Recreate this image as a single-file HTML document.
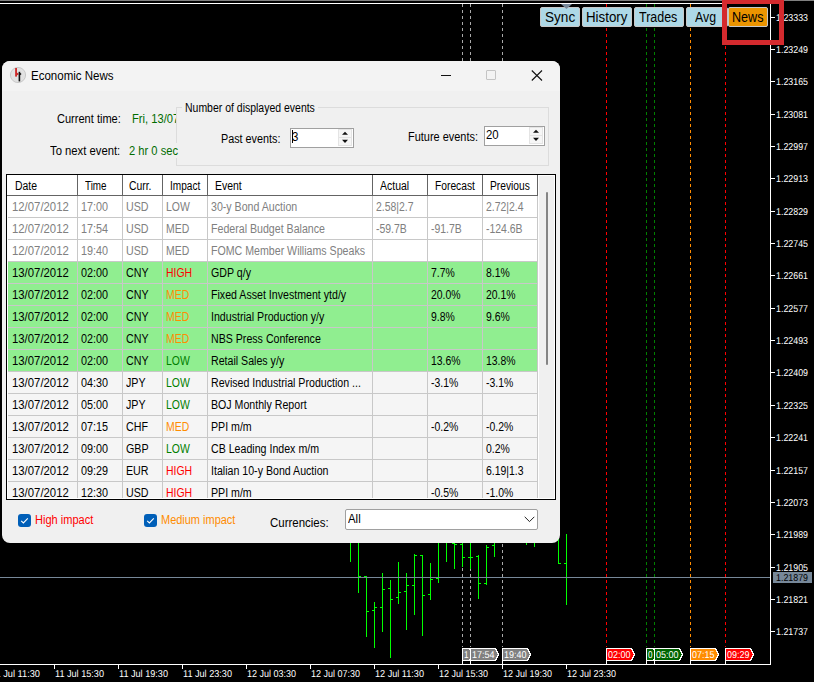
<!DOCTYPE html><html><head><meta charset="utf-8"><style>
html,body{margin:0;padding:0;}
body{width:814px;height:682px;background:#000;position:relative;overflow:hidden;font-family:"Liberation Sans",sans-serif;}
.chart{position:absolute;left:0;top:0;}
.t{position:absolute;white-space:pre;transform-origin:0 0;}
.btn{position:absolute;border:1px solid #c8c8c8;border-radius:2px;}
</style></head><body>
<svg class="chart" width="814" height="682" viewBox="0 0 814 682" shape-rendering="crispEdges" font-family="Liberation Sans, sans-serif"><rect x="0" y="0" width="814" height="1" fill="#808080"/><rect x="0" y="3" width="771" height="1" fill="#fff"/><rect x="770" y="3" width="1" height="662" fill="#fff"/><rect x="0" y="664" width="771" height="1" fill="#fff"/><line x1="462.5" y1="4" x2="462.5" y2="647" stroke="#a9a9a9" stroke-width="1" stroke-dasharray="3 3"/><line x1="470.5" y1="4" x2="470.5" y2="647" stroke="#a9a9a9" stroke-width="1" stroke-dasharray="3 3"/><line x1="502.5" y1="4" x2="502.5" y2="647" stroke="#a9a9a9" stroke-width="1" stroke-dasharray="3 3"/><line x1="606.5" y1="4" x2="606.5" y2="647" stroke="#ff0000" stroke-width="1" stroke-dasharray="3 3"/><line x1="646.5" y1="4" x2="646.5" y2="647" stroke="#008000" stroke-width="1" stroke-dasharray="3 3"/><line x1="654.5" y1="4" x2="654.5" y2="647" stroke="#008000" stroke-width="1" stroke-dasharray="3 3"/><line x1="690.5" y1="4" x2="690.5" y2="647" stroke="#ff8c00" stroke-width="1" stroke-dasharray="3 3"/><line x1="725.5" y1="4" x2="725.5" y2="647" stroke="#ff0000" stroke-width="1" stroke-dasharray="3 3"/><rect x="0" y="577" width="770" height="1" fill="#778899"/><rect x="350" y="530" width="1" height="32" fill="#00ff00"/><rect x="358" y="530" width="1" height="63" fill="#00ff00"/><rect x="359" y="576" width="2" height="1" fill="#00ff00"/><rect x="366" y="576" width="1" height="61" fill="#00ff00"/><rect x="364" y="576" width="2" height="1" fill="#00ff00"/><rect x="367" y="611" width="2" height="1" fill="#00ff00"/><rect x="374" y="602" width="1" height="46" fill="#00ff00"/><rect x="372" y="610" width="2" height="1" fill="#00ff00"/><rect x="375" y="607" width="2" height="1" fill="#00ff00"/><rect x="382" y="573" width="1" height="59" fill="#00ff00"/><rect x="380" y="607" width="2" height="1" fill="#00ff00"/><rect x="383" y="589" width="2" height="1" fill="#00ff00"/><rect x="390" y="580" width="1" height="78" fill="#00ff00"/><rect x="388" y="588" width="2" height="1" fill="#00ff00"/><rect x="391" y="599" width="2" height="1" fill="#00ff00"/><rect x="398" y="562" width="1" height="42" fill="#00ff00"/><rect x="396" y="597" width="2" height="1" fill="#00ff00"/><rect x="399" y="592" width="2" height="1" fill="#00ff00"/><rect x="406" y="573" width="1" height="57" fill="#00ff00"/><rect x="404" y="591" width="2" height="1" fill="#00ff00"/><rect x="407" y="585" width="2" height="1" fill="#00ff00"/><rect x="414" y="554" width="1" height="61" fill="#00ff00"/><rect x="412" y="585" width="2" height="1" fill="#00ff00"/><rect x="415" y="555" width="2" height="1" fill="#00ff00"/><rect x="422" y="555" width="1" height="81" fill="#00ff00"/><rect x="420" y="555" width="2" height="1" fill="#00ff00"/><rect x="423" y="595" width="2" height="1" fill="#00ff00"/><rect x="430" y="563" width="1" height="37" fill="#00ff00"/><rect x="428" y="594" width="2" height="1" fill="#00ff00"/><rect x="431" y="579" width="2" height="1" fill="#00ff00"/><rect x="438" y="530" width="1" height="53" fill="#00ff00"/><rect x="436" y="578" width="2" height="1" fill="#00ff00"/><rect x="446" y="530" width="1" height="32" fill="#00ff00"/><rect x="454" y="530" width="1" height="39" fill="#00ff00"/><rect x="452" y="543" width="2" height="1" fill="#00ff00"/><rect x="455" y="544" width="2" height="1" fill="#00ff00"/><rect x="462" y="530" width="1" height="37" fill="#00ff00"/><rect x="460" y="544" width="2" height="1" fill="#00ff00"/><rect x="463" y="557" width="2" height="1" fill="#00ff00"/><rect x="470" y="530" width="1" height="39" fill="#00ff00"/><rect x="468" y="557" width="2" height="1" fill="#00ff00"/><rect x="471" y="557" width="2" height="1" fill="#00ff00"/><rect x="478" y="555" width="1" height="44" fill="#00ff00"/><rect x="476" y="556" width="2" height="1" fill="#00ff00"/><rect x="479" y="583" width="2" height="1" fill="#00ff00"/><rect x="486" y="545" width="1" height="40" fill="#00ff00"/><rect x="484" y="583" width="2" height="1" fill="#00ff00"/><rect x="487" y="547" width="2" height="1" fill="#00ff00"/><rect x="494" y="530" width="1" height="27" fill="#00ff00"/><rect x="492" y="545" width="2" height="1" fill="#00ff00"/><rect x="526" y="530" width="1" height="15" fill="#00ff00"/><rect x="534" y="530" width="1" height="17" fill="#00ff00"/><rect x="558" y="530" width="1" height="34" fill="#00ff00"/><rect x="559" y="563" width="2" height="1" fill="#00ff00"/><rect x="566" y="534" width="1" height="71" fill="#00ff00"/><rect x="564" y="563" width="2" height="1" fill="#00ff00"/><rect x="0" y="577" width="770" height="1" fill="#778899"/><rect x="771" y="17" width="4" height="1" fill="#fff"/><rect x="771" y="49" width="4" height="1" fill="#fff"/><rect x="771" y="81" width="4" height="1" fill="#fff"/><rect x="771" y="114" width="4" height="1" fill="#fff"/><rect x="771" y="146" width="4" height="1" fill="#fff"/><rect x="771" y="178" width="4" height="1" fill="#fff"/><rect x="771" y="211" width="4" height="1" fill="#fff"/><rect x="771" y="243" width="4" height="1" fill="#fff"/><rect x="771" y="275" width="4" height="1" fill="#fff"/><rect x="771" y="308" width="4" height="1" fill="#fff"/><rect x="771" y="340" width="4" height="1" fill="#fff"/><rect x="771" y="372" width="4" height="1" fill="#fff"/><rect x="771" y="405" width="4" height="1" fill="#fff"/><rect x="771" y="437" width="4" height="1" fill="#fff"/><rect x="771" y="470" width="4" height="1" fill="#fff"/><rect x="771" y="502" width="4" height="1" fill="#fff"/><rect x="771" y="534" width="4" height="1" fill="#fff"/><rect x="771" y="567" width="4" height="1" fill="#fff"/><rect x="771" y="599" width="4" height="1" fill="#fff"/><rect x="771" y="631" width="4" height="1" fill="#fff"/><rect x="-10" y="665" width="1" height="4" fill="#fff"/><rect x="54" y="665" width="1" height="4" fill="#fff"/><rect x="118" y="665" width="1" height="4" fill="#fff"/><rect x="182" y="665" width="1" height="4" fill="#fff"/><rect x="246" y="665" width="1" height="4" fill="#fff"/><rect x="310" y="665" width="1" height="4" fill="#fff"/><rect x="374" y="665" width="1" height="4" fill="#fff"/><rect x="438" y="665" width="1" height="4" fill="#fff"/><rect x="502" y="665" width="1" height="4" fill="#fff"/><rect x="566" y="665" width="1" height="4" fill="#fff"/><rect x="773" y="572" width="39" height="11" fill="#778899"/><polygon points="462.5,648.5 469.5,648.5 472.5,654.5 469.5,660.5 462.5,660.5" fill="#808080" stroke="#fff" stroke-width="1"/><rect x="462" y="661" width="1" height="4" fill="#fff"/><text x="464" y="658" fill="#fff" font-size="10" text-rendering="geometricPrecision" shape-rendering="auto" textLength="4.5" lengthAdjust="spacingAndGlyphs">1</text><polygon points="470.5,648.5 495.5,648.5 498.5,654.5 495.5,660.5 470.5,660.5" fill="#808080" stroke="#fff" stroke-width="1"/><rect x="470" y="661" width="1" height="4" fill="#fff"/><text x="472" y="658" fill="#fff" font-size="10" text-rendering="geometricPrecision" shape-rendering="auto" textLength="22.5" lengthAdjust="spacingAndGlyphs">17:54</text><polygon points="502.5,648.5 527.5,648.5 530.5,654.5 527.5,660.5 502.5,660.5" fill="#808080" stroke="#fff" stroke-width="1"/><rect x="502" y="661" width="1" height="4" fill="#fff"/><text x="504" y="658" fill="#fff" font-size="10" text-rendering="geometricPrecision" shape-rendering="auto" textLength="22.5" lengthAdjust="spacingAndGlyphs">19:40</text><polygon points="606.5,648.5 631.5,648.5 634.5,654.5 631.5,660.5 606.5,660.5" fill="#ff0000" stroke="#fff" stroke-width="1"/><rect x="606" y="661" width="1" height="4" fill="#fff"/><text x="608" y="658" fill="#fff" font-size="10" text-rendering="geometricPrecision" shape-rendering="auto" textLength="22.5" lengthAdjust="spacingAndGlyphs">02:00</text><polygon points="646.5,648.5 653.5,648.5 656.5,654.5 653.5,660.5 646.5,660.5" fill="#006400" stroke="#fff" stroke-width="1"/><rect x="646" y="661" width="1" height="4" fill="#fff"/><text x="648" y="658" fill="#fff" font-size="10" text-rendering="geometricPrecision" shape-rendering="auto" textLength="4.5" lengthAdjust="spacingAndGlyphs">0</text><polygon points="654.5,648.5 679.5,648.5 682.5,654.5 679.5,660.5 654.5,660.5" fill="#006400" stroke="#fff" stroke-width="1"/><rect x="654" y="661" width="1" height="4" fill="#fff"/><text x="656" y="658" fill="#fff" font-size="10" text-rendering="geometricPrecision" shape-rendering="auto" textLength="22.5" lengthAdjust="spacingAndGlyphs">05:00</text><polygon points="690.5,648.5 715.5,648.5 718.5,654.5 715.5,660.5 690.5,660.5" fill="#ff8c00" stroke="#fff" stroke-width="1"/><rect x="690" y="661" width="1" height="4" fill="#fff"/><text x="692" y="658" fill="#fff" font-size="10" text-rendering="geometricPrecision" shape-rendering="auto" textLength="22.5" lengthAdjust="spacingAndGlyphs">07:15</text><polygon points="725.5,648.5 750.5,648.5 753.5,654.5 750.5,660.5 725.5,660.5" fill="#ff0000" stroke="#fff" stroke-width="1"/><rect x="725" y="661" width="1" height="4" fill="#fff"/><text x="727" y="658" fill="#fff" font-size="10" text-rendering="geometricPrecision" shape-rendering="auto" textLength="22.5" lengthAdjust="spacingAndGlyphs">09:29</text><g shape-rendering="auto" text-rendering="geometricPrecision"><text x="776" y="21" fill="#fff" font-size="10" textLength="32" lengthAdjust="spacingAndGlyphs">1.23333</text><text x="776" y="53" fill="#fff" font-size="10" textLength="32" lengthAdjust="spacingAndGlyphs">1.23249</text><text x="776" y="85" fill="#fff" font-size="10" textLength="32" lengthAdjust="spacingAndGlyphs">1.23165</text><text x="776" y="118" fill="#fff" font-size="10" textLength="32" lengthAdjust="spacingAndGlyphs">1.23081</text><text x="776" y="150" fill="#fff" font-size="10" textLength="32" lengthAdjust="spacingAndGlyphs">1.22997</text><text x="776" y="182" fill="#fff" font-size="10" textLength="32" lengthAdjust="spacingAndGlyphs">1.22913</text><text x="776" y="215" fill="#fff" font-size="10" textLength="32" lengthAdjust="spacingAndGlyphs">1.22829</text><text x="776" y="247" fill="#fff" font-size="10" textLength="32" lengthAdjust="spacingAndGlyphs">1.22745</text><text x="776" y="279" fill="#fff" font-size="10" textLength="32" lengthAdjust="spacingAndGlyphs">1.22661</text><text x="776" y="312" fill="#fff" font-size="10" textLength="32" lengthAdjust="spacingAndGlyphs">1.22577</text><text x="776" y="344" fill="#fff" font-size="10" textLength="32" lengthAdjust="spacingAndGlyphs">1.22493</text><text x="776" y="376" fill="#fff" font-size="10" textLength="32" lengthAdjust="spacingAndGlyphs">1.22409</text><text x="776" y="409" fill="#fff" font-size="10" textLength="32" lengthAdjust="spacingAndGlyphs">1.22325</text><text x="776" y="441" fill="#fff" font-size="10" textLength="32" lengthAdjust="spacingAndGlyphs">1.22241</text><text x="776" y="474" fill="#fff" font-size="10" textLength="32" lengthAdjust="spacingAndGlyphs">1.22157</text><text x="776" y="506" fill="#fff" font-size="10" textLength="32" lengthAdjust="spacingAndGlyphs">1.22073</text><text x="776" y="538" fill="#fff" font-size="10" textLength="32" lengthAdjust="spacingAndGlyphs">1.21989</text><text x="776" y="571" fill="#fff" font-size="10" textLength="32" lengthAdjust="spacingAndGlyphs">1.21905</text><text x="776" y="603" fill="#fff" font-size="10" textLength="32" lengthAdjust="spacingAndGlyphs">1.21821</text><text x="776" y="635" fill="#fff" font-size="10" textLength="32" lengthAdjust="spacingAndGlyphs">1.21737</text><text x="776" y="581" fill="#000" font-size="10" textLength="32" lengthAdjust="spacingAndGlyphs">1.21879</text><text x="-9" y="677" fill="#fff" font-size="10" textLength="49" lengthAdjust="spacingAndGlyphs">11 Jul 11:30</text><text x="55" y="677" fill="#fff" font-size="10" textLength="49" lengthAdjust="spacingAndGlyphs">11 Jul 15:30</text><text x="119" y="677" fill="#fff" font-size="10" textLength="49" lengthAdjust="spacingAndGlyphs">11 Jul 19:30</text><text x="183" y="677" fill="#fff" font-size="10" textLength="49" lengthAdjust="spacingAndGlyphs">11 Jul 23:30</text><text x="247" y="677" fill="#fff" font-size="10" textLength="49" lengthAdjust="spacingAndGlyphs">12 Jul 03:30</text><text x="311" y="677" fill="#fff" font-size="10" textLength="49" lengthAdjust="spacingAndGlyphs">12 Jul 07:30</text><text x="375" y="677" fill="#fff" font-size="10" textLength="49" lengthAdjust="spacingAndGlyphs">12 Jul 11:30</text><text x="439" y="677" fill="#fff" font-size="10" textLength="49" lengthAdjust="spacingAndGlyphs">12 Jul 15:30</text><text x="503" y="677" fill="#fff" font-size="10" textLength="49" lengthAdjust="spacingAndGlyphs">12 Jul 19:30</text><text x="567" y="677" fill="#fff" font-size="10" textLength="49" lengthAdjust="spacingAndGlyphs">12 Jul 23:30</text></g></svg>
<div class="btn" style="left:540px;top:7px;width:38px;height:18px;background:#add8e6"></div>
<div class="t" style="left:544.60px;top:9.95px;font-size:14px;line-height:14px;color:#000;transform:scaleX(0.97);">Sync</div>
<div class="btn" style="left:582px;top:7px;width:48px;height:18px;background:#add8e6"></div>
<div class="t" style="left:585.60px;top:9.95px;font-size:14px;line-height:14px;color:#000;transform:scaleX(0.95);">History</div>
<div class="btn" style="left:634px;top:7px;width:48px;height:18px;background:#add8e6"></div>
<div class="t" style="left:638.80px;top:9.95px;font-size:14px;line-height:14px;color:#000;transform:scaleX(0.89);">Trades</div>
<div class="btn" style="left:686px;top:7px;width:40px;height:18px;background:#add8e6"></div>
<div class="t" style="left:694.80px;top:9.95px;font-size:14px;line-height:14px;color:#000;transform:scaleX(0.88);">Avg</div>
<div class="btn" style="left:728px;top:7px;width:38px;height:18px;background:#eb9400"></div>
<div class="t" style="left:731.80px;top:9.95px;font-size:14px;line-height:14px;color:#000;transform:scaleX(0.9);">News</div>
<svg style="position:absolute;left:561px;top:4px" width="11" height="5"><polygon points="0,0 11,0 5.5,5" fill="#778899"/></svg>
<div style="position:absolute;left:722px;top:-1px;width:52px;height:36px;border:5px solid #d42a2e"></div>
<div style="position:absolute;left:2px;top:61px;width:558px;height:482px;border-radius:8px;background:#f0f0f0;overflow:hidden"><div style="position:absolute;left:0;top:0;width:100%;height:30px;background:#f3f3f3"></div></div>
<svg style="position:absolute;left:9px;top:66px" width="18" height="18" viewBox="0 0 18 18">
<circle cx="9" cy="9" r="7.6" fill="#e2e2e2" stroke="#c4c4c4" stroke-width="0.9"/>
<rect x="6.2" y="2" width="1.7" height="8.6" fill="#cc1a1a"/>
<polygon points="7.8,6.4 9.8,7.9 7.8,9.4" fill="#cc1a1a"/>
<rect x="9.6" y="5.8" width="1.6" height="9.6" fill="#101010"/>
<polygon points="11,6.8 12.6,8 11,9.2" fill="#101010"/>
</svg>
<div class="t" style="left:31.30px;top:69.84px;font-size:12px;line-height:12px;color:#000;transform:scaleX(0.96);">Economic News</div>
<div style="position:absolute;left:441px;top:75px;width:10px;height:1px;background:#111"></div>
<div style="position:absolute;left:486px;top:70px;width:8px;height:8px;border:1px solid #c4c4c4;border-radius:1px"></div>
<svg style="position:absolute;left:531px;top:70px" width="12" height="11" viewBox="0 0 12 11">
<path d="M0.8 0.5 L11 10.5 M11 0.5 L0.8 10.5" stroke="#111" stroke-width="1.1" fill="none"/></svg>
<div class="t" style="left:56.60px;top:112.84px;font-size:12px;line-height:12px;color:#000;transform:scaleX(0.92);">Current time:</div>
<div style="position:absolute;left:131px;top:110px;width:45px;height:18px;overflow:hidden"><div class="t" style="left:0.60px;top:2.84px;font-size:12px;line-height:12px;color:#006c00;transform:scaleX(0.93);">Fri, 13/07/2012 00:00:00</div></div>
<div class="t" style="left:50.30px;top:144.84px;font-size:12px;line-height:12px;color:#000;transform:scaleX(0.94);">To next event:</div>
<div style="position:absolute;left:176px;top:107px;width:371px;height:57px;border:1px solid #dcdcdc"></div>
<div style="position:absolute;left:182px;top:100px;width:136px;height:14px;background:#f0f0f0"></div>
<div class="t" style="left:184.60px;top:101.84px;font-size:12px;line-height:12px;color:#000;transform:scaleX(0.873);">Number of displayed events</div>
<div style="position:absolute;left:129px;top:143px;width:50px;height:15px;background:#f0f0f0"></div>
<div class="t" style="left:129.40px;top:144.84px;font-size:12px;line-height:12px;color:#006c00;transform:scaleX(0.93);">2 hr 0 sec</div>
<div class="t" style="left:221.00px;top:132.64px;font-size:12px;line-height:12px;color:#000;transform:scaleX(0.9);">Past events:</div>
<div class="t" style="left:407.80px;top:130.84px;font-size:12px;line-height:12px;color:#000;transform:scaleX(0.912);">Future events:</div>
<div style="position:absolute;left:290px;top:128px;width:62px;height:18px;border:1px solid #a0a0a0;background:#fff"></div>
<div style="position:absolute;left:338px;top:129px;width:12px;height:7px;border:1px solid #e4e4e4;background:#f6f6f6"></div>
<div style="position:absolute;left:338px;top:137px;width:12px;height:7px;border:1px solid #e4e4e4;background:#f6f6f6"></div>
<svg style="position:absolute;left:341px;top:131px" width="8" height="14"><polygon points="1,3.8 4,0.7 7,3.8" fill="#111"/><polygon points="1,8.8 7,8.8 4,11.9" fill="#111"/></svg>
<div class="t" style="left:292.20px;top:130.54px;font-size:12px;line-height:12px;color:#000;transform:scaleX(0.95);">3</div>
<div style="position:absolute;left:292px;top:130px;width:1px;height:13px;background:#000"></div>
<div style="position:absolute;left:484px;top:126px;width:59px;height:18px;border:1px solid #a0a0a0;background:#fff"></div>
<div style="position:absolute;left:529px;top:127px;width:12px;height:7px;border:1px solid #e4e4e4;background:#f6f6f6"></div>
<div style="position:absolute;left:529px;top:135px;width:12px;height:7px;border:1px solid #e4e4e4;background:#f6f6f6"></div>
<svg style="position:absolute;left:532px;top:129px" width="8" height="14"><polygon points="1,3.8 4,0.7 7,3.8" fill="#111"/><polygon points="1,8.8 7,8.8 4,11.9" fill="#111"/></svg>
<div class="t" style="left:486.20px;top:128.54px;font-size:12px;line-height:12px;color:#000;transform:scaleX(0.95);">20</div>
<div style="position:absolute;left:6px;top:174px;width:548px;height:324px;border:1px solid #000;background:#fff"></div>
<div style="position:absolute;left:539px;top:176px;width:15px;height:322px;background:#f0f0f0"></div>
<div style="position:absolute;left:546px;top:192px;width:2px;height:173px;background:#858585;border-radius:1px"></div>
<div style="position:absolute;left:7px;top:175px;width:531px;height:21px;background:#fff"></div>
<div style="position:absolute;left:7px;top:195px;width:531px;height:1px;background:#646464"></div>
<div style="position:absolute;left:77px;top:175px;width:1px;height:21px;background:#646464"></div>
<div style="position:absolute;left:122px;top:175px;width:1px;height:21px;background:#646464"></div>
<div style="position:absolute;left:162px;top:175px;width:1px;height:21px;background:#646464"></div>
<div style="position:absolute;left:207px;top:175px;width:1px;height:21px;background:#646464"></div>
<div style="position:absolute;left:372px;top:175px;width:1px;height:21px;background:#646464"></div>
<div style="position:absolute;left:427px;top:175px;width:1px;height:21px;background:#646464"></div>
<div style="position:absolute;left:482px;top:175px;width:1px;height:21px;background:#646464"></div>
<div style="position:absolute;left:537px;top:175px;width:1px;height:21px;background:#646464"></div>
<div class="t" style="left:15.40px;top:179.64px;font-size:12px;line-height:12px;color:#000;transform:scaleX(0.87);">Date</div>
<div class="t" style="left:85.10px;top:179.64px;font-size:12px;line-height:12px;color:#000;transform:scaleX(0.82);">Time</div>
<div class="t" style="left:128.80px;top:179.64px;font-size:12px;line-height:12px;color:#000;transform:scaleX(0.865);">Curr.</div>
<div class="t" style="left:169.60px;top:179.64px;font-size:12px;line-height:12px;color:#000;transform:scaleX(0.84);">Impact</div>
<div class="t" style="left:214.50px;top:179.64px;font-size:12px;line-height:12px;color:#000;transform:scaleX(0.87);">Event</div>
<div class="t" style="left:379.50px;top:179.64px;font-size:12px;line-height:12px;color:#000;transform:scaleX(0.873);">Actual</div>
<div class="t" style="left:434.90px;top:179.64px;font-size:12px;line-height:12px;color:#000;transform:scaleX(0.855);">Forecast</div>
<div class="t" style="left:489.90px;top:179.64px;font-size:12px;line-height:12px;color:#000;transform:scaleX(0.853);">Previous</div>
<div style="position:absolute;left:8px;top:196px;width:530px;height:302px;overflow:hidden"><div style="position:absolute;left:0;top:0px;width:530px;height:21px;background:#ffffff"></div><div style="position:absolute;left:0;top:21px;width:530px;height:1px;background:#c8c8c8"></div><div class="t" style="left:3.70px;top:5.14px;font-size:12px;line-height:12px;color:#808080;transform:scaleX(0.945);">12/07/2012</div><div class="t" style="left:73.20px;top:5.14px;font-size:12px;line-height:12px;color:#808080;transform:scaleX(0.9);">17:00</div><div class="t" style="left:118.20px;top:5.14px;font-size:12px;line-height:12px;color:#808080;transform:scaleX(0.89);">USD</div><div class="t" style="left:158.20px;top:5.14px;font-size:12px;line-height:12px;color:#808080;transform:scaleX(0.87);">LOW</div><div class="t" style="left:202.80px;top:5.14px;font-size:12px;line-height:12px;color:#808080;transform:scaleX(0.885);">30-y Bond Auction</div><div class="t" style="left:368.20px;top:5.14px;font-size:12px;line-height:12px;color:#808080;transform:scaleX(0.87);">2.58|2.7</div><div class="t" style="left:478.20px;top:5.14px;font-size:12px;line-height:12px;color:#808080;transform:scaleX(0.87);">2.72|2.4</div><div style="position:absolute;left:0;top:22px;width:530px;height:21px;background:#ffffff"></div><div style="position:absolute;left:0;top:43px;width:530px;height:1px;background:#c8c8c8"></div><div class="t" style="left:3.70px;top:27.14px;font-size:12px;line-height:12px;color:#808080;transform:scaleX(0.945);">12/07/2012</div><div class="t" style="left:73.20px;top:27.14px;font-size:12px;line-height:12px;color:#808080;transform:scaleX(0.9);">17:54</div><div class="t" style="left:118.20px;top:27.14px;font-size:12px;line-height:12px;color:#808080;transform:scaleX(0.89);">USD</div><div class="t" style="left:158.20px;top:27.14px;font-size:12px;line-height:12px;color:#808080;transform:scaleX(0.87);">MED</div><div class="t" style="left:202.80px;top:27.14px;font-size:12px;line-height:12px;color:#808080;transform:scaleX(0.885);">Federal Budget Balance</div><div class="t" style="left:368.20px;top:27.14px;font-size:12px;line-height:12px;color:#808080;transform:scaleX(0.87);">-59.7B</div><div class="t" style="left:423.20px;top:27.14px;font-size:12px;line-height:12px;color:#808080;transform:scaleX(0.87);">-91.7B</div><div class="t" style="left:478.20px;top:27.14px;font-size:12px;line-height:12px;color:#808080;transform:scaleX(0.87);">-124.6B</div><div style="position:absolute;left:0;top:44px;width:530px;height:21px;background:#ffffff"></div><div style="position:absolute;left:0;top:65px;width:530px;height:1px;background:#c8c8c8"></div><div class="t" style="left:3.70px;top:49.14px;font-size:12px;line-height:12px;color:#808080;transform:scaleX(0.945);">12/07/2012</div><div class="t" style="left:73.20px;top:49.14px;font-size:12px;line-height:12px;color:#808080;transform:scaleX(0.9);">19:40</div><div class="t" style="left:118.20px;top:49.14px;font-size:12px;line-height:12px;color:#808080;transform:scaleX(0.89);">USD</div><div class="t" style="left:158.20px;top:49.14px;font-size:12px;line-height:12px;color:#808080;transform:scaleX(0.87);">MED</div><div class="t" style="left:202.80px;top:49.14px;font-size:12px;line-height:12px;color:#808080;transform:scaleX(0.885);">FOMC Member Williams Speaks</div><div style="position:absolute;left:0;top:66px;width:530px;height:21px;background:#90ee90"></div><div style="position:absolute;left:0;top:87px;width:530px;height:1px;background:#c8c8c8"></div><div class="t" style="left:3.70px;top:71.14px;font-size:12px;line-height:12px;color:#000;transform:scaleX(0.945);">13/07/2012</div><div class="t" style="left:73.20px;top:71.14px;font-size:12px;line-height:12px;color:#000;transform:scaleX(0.9);">02:00</div><div class="t" style="left:118.20px;top:71.14px;font-size:12px;line-height:12px;color:#000;transform:scaleX(0.89);">CNY</div><div class="t" style="left:158.20px;top:71.14px;font-size:12px;line-height:12px;color:#ff0000;transform:scaleX(0.87);">HIGH</div><div class="t" style="left:202.80px;top:71.14px;font-size:12px;line-height:12px;color:#000;transform:scaleX(0.885);">GDP q/y</div><div class="t" style="left:423.20px;top:71.14px;font-size:12px;line-height:12px;color:#000;transform:scaleX(0.87);">7.7%</div><div class="t" style="left:478.20px;top:71.14px;font-size:12px;line-height:12px;color:#000;transform:scaleX(0.87);">8.1%</div><div style="position:absolute;left:0;top:88px;width:530px;height:21px;background:#90ee90"></div><div style="position:absolute;left:0;top:109px;width:530px;height:1px;background:#c8c8c8"></div><div class="t" style="left:3.70px;top:93.14px;font-size:12px;line-height:12px;color:#000;transform:scaleX(0.945);">13/07/2012</div><div class="t" style="left:73.20px;top:93.14px;font-size:12px;line-height:12px;color:#000;transform:scaleX(0.9);">02:00</div><div class="t" style="left:118.20px;top:93.14px;font-size:12px;line-height:12px;color:#000;transform:scaleX(0.89);">CNY</div><div class="t" style="left:158.20px;top:93.14px;font-size:12px;line-height:12px;color:#ff8c00;transform:scaleX(0.87);">MED</div><div class="t" style="left:202.80px;top:93.14px;font-size:12px;line-height:12px;color:#000;transform:scaleX(0.885);">Fixed Asset Investment ytd/y</div><div class="t" style="left:423.20px;top:93.14px;font-size:12px;line-height:12px;color:#000;transform:scaleX(0.87);">20.0%</div><div class="t" style="left:478.20px;top:93.14px;font-size:12px;line-height:12px;color:#000;transform:scaleX(0.87);">20.1%</div><div style="position:absolute;left:0;top:110px;width:530px;height:21px;background:#90ee90"></div><div style="position:absolute;left:0;top:131px;width:530px;height:1px;background:#c8c8c8"></div><div class="t" style="left:3.70px;top:115.14px;font-size:12px;line-height:12px;color:#000;transform:scaleX(0.945);">13/07/2012</div><div class="t" style="left:73.20px;top:115.14px;font-size:12px;line-height:12px;color:#000;transform:scaleX(0.9);">02:00</div><div class="t" style="left:118.20px;top:115.14px;font-size:12px;line-height:12px;color:#000;transform:scaleX(0.89);">CNY</div><div class="t" style="left:158.20px;top:115.14px;font-size:12px;line-height:12px;color:#ff8c00;transform:scaleX(0.87);">MED</div><div class="t" style="left:202.80px;top:115.14px;font-size:12px;line-height:12px;color:#000;transform:scaleX(0.885);">Industrial Production y/y</div><div class="t" style="left:423.20px;top:115.14px;font-size:12px;line-height:12px;color:#000;transform:scaleX(0.87);">9.8%</div><div class="t" style="left:478.20px;top:115.14px;font-size:12px;line-height:12px;color:#000;transform:scaleX(0.87);">9.6%</div><div style="position:absolute;left:0;top:132px;width:530px;height:21px;background:#90ee90"></div><div style="position:absolute;left:0;top:153px;width:530px;height:1px;background:#c8c8c8"></div><div class="t" style="left:3.70px;top:137.14px;font-size:12px;line-height:12px;color:#000;transform:scaleX(0.945);">13/07/2012</div><div class="t" style="left:73.20px;top:137.14px;font-size:12px;line-height:12px;color:#000;transform:scaleX(0.9);">02:00</div><div class="t" style="left:118.20px;top:137.14px;font-size:12px;line-height:12px;color:#000;transform:scaleX(0.89);">CNY</div><div class="t" style="left:158.20px;top:137.14px;font-size:12px;line-height:12px;color:#ff8c00;transform:scaleX(0.87);">MED</div><div class="t" style="left:202.80px;top:137.14px;font-size:12px;line-height:12px;color:#000;transform:scaleX(0.885);">NBS Press Conference</div><div style="position:absolute;left:0;top:154px;width:530px;height:21px;background:#90ee90"></div><div style="position:absolute;left:0;top:175px;width:530px;height:1px;background:#c8c8c8"></div><div class="t" style="left:3.70px;top:159.14px;font-size:12px;line-height:12px;color:#000;transform:scaleX(0.945);">13/07/2012</div><div class="t" style="left:73.20px;top:159.14px;font-size:12px;line-height:12px;color:#000;transform:scaleX(0.9);">02:00</div><div class="t" style="left:118.20px;top:159.14px;font-size:12px;line-height:12px;color:#000;transform:scaleX(0.89);">CNY</div><div class="t" style="left:158.20px;top:159.14px;font-size:12px;line-height:12px;color:#008000;transform:scaleX(0.87);">LOW</div><div class="t" style="left:202.80px;top:159.14px;font-size:12px;line-height:12px;color:#000;transform:scaleX(0.885);">Retail Sales y/y</div><div class="t" style="left:423.20px;top:159.14px;font-size:12px;line-height:12px;color:#000;transform:scaleX(0.87);">13.6%</div><div class="t" style="left:478.20px;top:159.14px;font-size:12px;line-height:12px;color:#000;transform:scaleX(0.87);">13.8%</div><div style="position:absolute;left:0;top:176px;width:530px;height:21px;background:#f5f5f5"></div><div style="position:absolute;left:0;top:197px;width:530px;height:1px;background:#c8c8c8"></div><div class="t" style="left:3.70px;top:181.14px;font-size:12px;line-height:12px;color:#000;transform:scaleX(0.945);">13/07/2012</div><div class="t" style="left:73.20px;top:181.14px;font-size:12px;line-height:12px;color:#000;transform:scaleX(0.9);">04:30</div><div class="t" style="left:118.20px;top:181.14px;font-size:12px;line-height:12px;color:#000;transform:scaleX(0.89);">JPY</div><div class="t" style="left:158.20px;top:181.14px;font-size:12px;line-height:12px;color:#008000;transform:scaleX(0.87);">LOW</div><div class="t" style="left:202.80px;top:181.14px;font-size:12px;line-height:12px;color:#000;transform:scaleX(0.885);">Revised Industrial Production ...</div><div class="t" style="left:423.20px;top:181.14px;font-size:12px;line-height:12px;color:#000;transform:scaleX(0.87);">-3.1%</div><div class="t" style="left:478.20px;top:181.14px;font-size:12px;line-height:12px;color:#000;transform:scaleX(0.87);">-3.1%</div><div style="position:absolute;left:0;top:198px;width:530px;height:21px;background:#f5f5f5"></div><div style="position:absolute;left:0;top:219px;width:530px;height:1px;background:#c8c8c8"></div><div class="t" style="left:3.70px;top:203.14px;font-size:12px;line-height:12px;color:#000;transform:scaleX(0.945);">13/07/2012</div><div class="t" style="left:73.20px;top:203.14px;font-size:12px;line-height:12px;color:#000;transform:scaleX(0.9);">05:00</div><div class="t" style="left:118.20px;top:203.14px;font-size:12px;line-height:12px;color:#000;transform:scaleX(0.89);">JPY</div><div class="t" style="left:158.20px;top:203.14px;font-size:12px;line-height:12px;color:#008000;transform:scaleX(0.87);">LOW</div><div class="t" style="left:202.80px;top:203.14px;font-size:12px;line-height:12px;color:#000;transform:scaleX(0.885);">BOJ Monthly Report</div><div style="position:absolute;left:0;top:220px;width:530px;height:21px;background:#f5f5f5"></div><div style="position:absolute;left:0;top:241px;width:530px;height:1px;background:#c8c8c8"></div><div class="t" style="left:3.70px;top:225.14px;font-size:12px;line-height:12px;color:#000;transform:scaleX(0.945);">13/07/2012</div><div class="t" style="left:73.20px;top:225.14px;font-size:12px;line-height:12px;color:#000;transform:scaleX(0.9);">07:15</div><div class="t" style="left:118.20px;top:225.14px;font-size:12px;line-height:12px;color:#000;transform:scaleX(0.89);">CHF</div><div class="t" style="left:158.20px;top:225.14px;font-size:12px;line-height:12px;color:#ff8c00;transform:scaleX(0.87);">MED</div><div class="t" style="left:202.80px;top:225.14px;font-size:12px;line-height:12px;color:#000;transform:scaleX(0.885);">PPI m/m</div><div class="t" style="left:423.20px;top:225.14px;font-size:12px;line-height:12px;color:#000;transform:scaleX(0.87);">-0.2%</div><div class="t" style="left:478.20px;top:225.14px;font-size:12px;line-height:12px;color:#000;transform:scaleX(0.87);">-0.2%</div><div style="position:absolute;left:0;top:242px;width:530px;height:21px;background:#f5f5f5"></div><div style="position:absolute;left:0;top:263px;width:530px;height:1px;background:#c8c8c8"></div><div class="t" style="left:3.70px;top:247.14px;font-size:12px;line-height:12px;color:#000;transform:scaleX(0.945);">13/07/2012</div><div class="t" style="left:73.20px;top:247.14px;font-size:12px;line-height:12px;color:#000;transform:scaleX(0.9);">09:00</div><div class="t" style="left:118.20px;top:247.14px;font-size:12px;line-height:12px;color:#000;transform:scaleX(0.89);">GBP</div><div class="t" style="left:158.20px;top:247.14px;font-size:12px;line-height:12px;color:#008000;transform:scaleX(0.87);">LOW</div><div class="t" style="left:202.80px;top:247.14px;font-size:12px;line-height:12px;color:#000;transform:scaleX(0.885);">CB Leading Index m/m</div><div class="t" style="left:478.20px;top:247.14px;font-size:12px;line-height:12px;color:#000;transform:scaleX(0.87);">0.2%</div><div style="position:absolute;left:0;top:264px;width:530px;height:21px;background:#f5f5f5"></div><div style="position:absolute;left:0;top:285px;width:530px;height:1px;background:#c8c8c8"></div><div class="t" style="left:3.70px;top:269.14px;font-size:12px;line-height:12px;color:#000;transform:scaleX(0.945);">13/07/2012</div><div class="t" style="left:73.20px;top:269.14px;font-size:12px;line-height:12px;color:#000;transform:scaleX(0.9);">09:29</div><div class="t" style="left:118.20px;top:269.14px;font-size:12px;line-height:12px;color:#000;transform:scaleX(0.89);">EUR</div><div class="t" style="left:158.20px;top:269.14px;font-size:12px;line-height:12px;color:#ff0000;transform:scaleX(0.87);">HIGH</div><div class="t" style="left:202.80px;top:269.14px;font-size:12px;line-height:12px;color:#000;transform:scaleX(0.885);">Italian 10-y Bond Auction</div><div class="t" style="left:478.20px;top:269.14px;font-size:12px;line-height:12px;color:#000;transform:scaleX(0.87);">6.19|1.3</div><div style="position:absolute;left:0;top:286px;width:530px;height:21px;background:#f5f5f5"></div><div style="position:absolute;left:0;top:307px;width:530px;height:1px;background:#c8c8c8"></div><div class="t" style="left:3.70px;top:291.14px;font-size:12px;line-height:12px;color:#000;transform:scaleX(0.945);">13/07/2012</div><div class="t" style="left:73.20px;top:291.14px;font-size:12px;line-height:12px;color:#000;transform:scaleX(0.9);">12:30</div><div class="t" style="left:118.20px;top:291.14px;font-size:12px;line-height:12px;color:#000;transform:scaleX(0.89);">USD</div><div class="t" style="left:158.20px;top:291.14px;font-size:12px;line-height:12px;color:#ff0000;transform:scaleX(0.87);">HIGH</div><div class="t" style="left:202.80px;top:291.14px;font-size:12px;line-height:12px;color:#000;transform:scaleX(0.885);">PPI m/m</div><div class="t" style="left:423.20px;top:291.14px;font-size:12px;line-height:12px;color:#000;transform:scaleX(0.87);">-0.5%</div><div class="t" style="left:478.20px;top:291.14px;font-size:12px;line-height:12px;color:#000;transform:scaleX(0.87);">-1.0%</div><div style="position:absolute;left:69px;top:0;width:1px;height:302px;background:#c8c8c8"></div><div style="position:absolute;left:114px;top:0;width:1px;height:302px;background:#c8c8c8"></div><div style="position:absolute;left:154px;top:0;width:1px;height:302px;background:#c8c8c8"></div><div style="position:absolute;left:199px;top:0;width:1px;height:302px;background:#c8c8c8"></div><div style="position:absolute;left:364px;top:0;width:1px;height:302px;background:#c8c8c8"></div><div style="position:absolute;left:419px;top:0;width:1px;height:302px;background:#c8c8c8"></div><div style="position:absolute;left:474px;top:0;width:1px;height:302px;background:#c8c8c8"></div><div style="position:absolute;left:529px;top:0;width:1px;height:302px;background:#c8c8c8"></div></div>
<div style="position:absolute;left:18px;top:514px;width:13px;height:13px;background:#005fb8;border-radius:3px"></div>
<svg style="position:absolute;left:18px;top:514px" width="13" height="13"><path d="M3.2 6.8 L5.4 9 L9.8 4.4" stroke="#fff" stroke-width="1.1" fill="none"/></svg>
<div class="t" style="left:35.00px;top:513.64px;font-size:12px;line-height:12px;color:#ff0000;transform:scaleX(0.92);">High impact</div>
<div style="position:absolute;left:144px;top:514px;width:13px;height:13px;background:#005fb8;border-radius:3px"></div>
<svg style="position:absolute;left:144px;top:514px" width="13" height="13"><path d="M3.2 6.8 L5.4 9 L9.8 4.4" stroke="#fff" stroke-width="1.1" fill="none"/></svg>
<div class="t" style="left:161.00px;top:513.64px;font-size:12px;line-height:12px;color:#ff8c00;transform:scaleX(0.914);">Medium impact</div>
<div class="t" style="left:270.10px;top:516.84px;font-size:12px;line-height:12px;color:#000;transform:scaleX(0.955);">Currencies:</div>
<div style="position:absolute;left:345px;top:509px;width:191px;height:19px;border:1px solid #a0a0a0;border-radius:2px;background:#fff"></div>
<div class="t" style="left:347.50px;top:512.84px;font-size:12px;line-height:12px;color:#000;transform:scaleX(0.95);">All</div>
<svg style="position:absolute;left:524px;top:516px" width="11" height="7"><path d="M0.7 0.8 L5.5 5.6 L10.3 0.8" stroke="#222" stroke-width="1" fill="none"/></svg>
</body></html>
